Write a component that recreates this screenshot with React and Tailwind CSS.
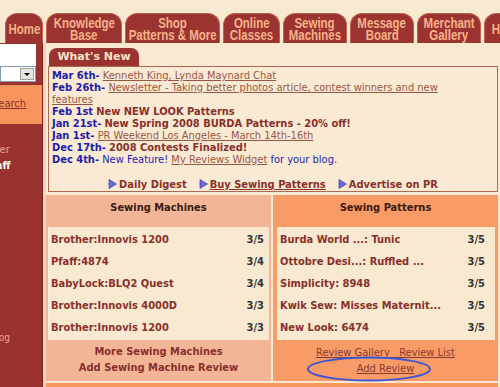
import React from 'react';

const tabs = [
  { w: 'w-[38px]', lines: ['Home'] },
  { w: 'w-[76px]', lines: ['Knowledge', 'Base'] },
  { w: 'w-[95px]', lines: ['Shop', 'Patterns & More'] },
  { w: 'w-[57px]', lines: ['Online', 'Classes'] },
  { w: 'w-[64px]', lines: ['Sewing', 'Machines'] },
  { w: 'w-[64px]', lines: ['Message', 'Board'] },
  { w: 'w-[64px]', lines: ['Merchant', 'Gallery'] },
  { w: 'w-[40px]', lines: ['Help'] },
];

const machines = [
  ['Brother:Innovis 1200', '3/5'],
  ['Pfaff:4874', '3/4'],
  ['BabyLock:BLQ2 Quest', '3/4'],
  ['Brother:Innovis 4000D', '3/3'],
  ['Brother:Innovis 1200', '3/3'],
];

const patterns = [
  ['Burda World ...: Tunic', '3/5'],
  ['Ottobre Desi...: Ruffled ...', '3/5'],
  ['Simplicity: 8948', '3/5'],
  ['Kwik Sew: Misses Maternit...', '3/5'],
  ['New Look: 6474', '3/5'],
];

const Arrow = () => (
  <svg width="9" height="10" viewBox="0 0 9 10" className="mr-[2px] mb-[2px]">
    <path d="M1 0.5 L8.5 5 L1 9.5 Z" fill="#6a6ad8" stroke="#4a4ab0" strokeWidth="0.8" />
  </svg>
);

const Date = ({ children }) => <span className="font-bold text-[#1c1cae]">{children}</span>;
const Hot = ({ children }) => <span className="font-bold text-[#8a2f2a]">{children}</span>;
const Lnk = ({ children }) => <span className="underline text-[#9a5646]">{children}</span>;

const App = () => {
  return (
    <div className="w-[500px] h-[387px] overflow-hidden bg-[#f8e9d2] font-['DejaVu_Sans_Condensed','DejaVu_Sans',sans-serif] text-[11px]">
      {/* Top tabs */}
      <div className="flex items-end gap-[3px] pl-[5px] pt-[13px] h-[43px] font-['Liberation_Sans',sans-serif]">
        {tabs.map((t, i) => (
          <div
            key={i}
            className={`${t.w} shrink-0 h-[30px] rounded-t-[12px] bg-[#9b3431] border border-b-0 border-[#c0604c] flex flex-col items-center justify-center text-[#f7b28a] font-bold text-[14px] leading-[12px]`}
          >
            {t.lines.map((l) => (
              <span key={l} className="whitespace-nowrap scale-x-[0.82]">{l}</span>
            ))}
          </div>
        ))}
      </div>

      <div className="flex h-[344px]">
        {/* Left sidebar */}
        <div className="w-[43px] shrink-0 overflow-hidden bg-[#9a3230] border-r border-[#7a2422] flex flex-col whitespace-nowrap">
          <div className="w-[36px] h-[22px] bg-white mt-[1px]" />
          <div className="w-[36px] h-[16px] bg-white border border-[#7f9db9] flex justify-end items-center pr-[1px]">
            <div className="w-[14px] h-[12px] bg-[#e6e6e0] border border-[#a0a0a0] flex items-center justify-center">
              <div className="w-0 h-0 border-l-[3px] border-r-[3px] border-t-[3px] border-l-transparent border-r-transparent border-t-black" />
            </div>
          </div>
          <div className="mt-[3px] h-[39px] bg-[#f8955c] flex items-center">
            <span className="underline text-[#8a2f2a] -ml-[8px]">Search</span>
          </div>
          <div className="mt-[18px] text-[#eea08c] -ml-[31px] leading-[16px]">Register</div>
          <div className="font-bold text-white -ml-[16px] leading-[16px]">Staff</div>
          <div className="mt-[156px] text-[#eea08c] -ml-[10px] text-[10px]">Blog</div>
        </div>

        {/* Main */}
        <div className="flex-1 pl-[2px] pr-[2px] pt-[5px] border-l-[3px] border-[#f4d2bd]">
          <div className="ml-[1px] w-[90px] h-[18px] rounded-t-[8px] bg-[#9b3431] flex items-center justify-center">
            <span className="font-bold text-[#fbe4cc] text-[11px] font-['DejaVu_Sans',sans-serif]">What's New</span>
          </div>
          <div className="border border-[#b06a52] bg-[#fbead3] h-[126px] px-[3px] pt-[3px] leading-[12px] whitespace-nowrap">
            <div><Date>Mar 6th-</Date> <Lnk>Kenneth King, Lynda Maynard Chat</Lnk></div>
            <div><Date>Feb 26th-</Date> <Lnk>Newsletter - Taking better photos article, contest winners and new<br />features</Lnk></div>
            <div><Date>Feb 1st</Date> <Hot>New NEW LOOK Patterns</Hot></div>
            <div><Date>Jan 21st-</Date> <Hot>New Spring 2008 BURDA Patterns - 20% off!</Hot></div>
            <div><Date>Jan 1st-</Date> <Lnk>PR Weekend Los Angeles - March 14th-16th</Lnk></div>
            <div><Date>Dec 17th-</Date> <Hot>2008 Contests Finalized!</Hot></div>
            <div><Date>Dec 4th-</Date> <span className="text-[#1c1cae]">New Feature!</span> <Lnk>My Reviews Widget</Lnk> <span className="text-[#1c1cae]">for your blog.</span></div>
            <div className="flex justify-center items-end gap-[12px] mt-[13px] font-bold text-[#8a2f2a]">
              <span className="flex items-end"><Arrow />Daily Digest</span>
              <span className="flex items-end"><Arrow /><span className="underline">Buy Sewing Patterns</span></span>
              <span className="flex items-end"><Arrow />Advertise on PR</span>
            </div>
          </div>

          {/* Review sections */}
          <div className="grid grid-cols-2 gap-[2px] mt-[3px] -ml-[2px]">
            {/* Sewing Machines */}
            <div className="bg-[#f2b598]">
              <div className="h-[32px] pt-[5px] text-center font-bold text-[#3a1a10]">Sewing Machines</div>
              <div className="bg-[#f9e9d1] ml-[2px] mr-[2px] pt-[2px] h-[113px] border-l border-[#fbf1e2]">
                {machines.map(([n, r], i) => (
                  <div key={i} className="h-[22px] flex items-center justify-between pl-[2px] pr-[5px]">
                    <span className="font-bold text-[#8a2f2a]">{n}</span>
                    <span className="font-bold text-[#333]">{r}</span>
                  </div>
                ))}
              </div>
              <div className="h-[41px] pt-[4px] flex flex-col items-center font-bold text-[#8a2f2a] leading-[16px]">
                <span>More Sewing Machines</span>
                <span>Add Sewing Machine Review</span>
              </div>
            </div>

            {/* Sewing Patterns */}
            <div className="bg-[#f99b66]">
              <div className="h-[32px] pt-[5px] text-center font-bold text-[#3a1a10]">Sewing Patterns</div>
              <div className="bg-[#f9e9d1] ml-[4px] mr-[3px] pt-[2px] h-[113px]">
                {patterns.map(([n, r], i) => (
                  <div key={i} className="h-[22px] flex items-center justify-between pl-[3px] pr-[10px]">
                    <span className="font-bold text-[#8a2f2a]">{n}</span>
                    <span className="font-bold text-[#333]">{r}</span>
                  </div>
                ))}
              </div>
              <div className="relative h-[41px] pt-[5px] flex flex-col items-center text-[#8a3a30] leading-[16px]">
                <span className="underline">Review Gallery&nbsp;&nbsp;&nbsp;Review List</span>
                <span className="underline">Add Review</span>
                <svg className="absolute left-[32px] top-[16px]" width="128" height="28" viewBox="0 0 128 28">
                  <ellipse cx="64" cy="13" rx="61" ry="11.5" fill="none" stroke="#3b55d6" strokeWidth="2" />
                </svg>
              </div>
            </div>
          </div>
          <div className="h-[2px] bg-[#fbe6d2] -ml-[2px]" />
          <div className="h-[6px] bg-[#f8985f] -ml-[2px]" />
        </div>
      </div>
    </div>
  );
};

export default App;
